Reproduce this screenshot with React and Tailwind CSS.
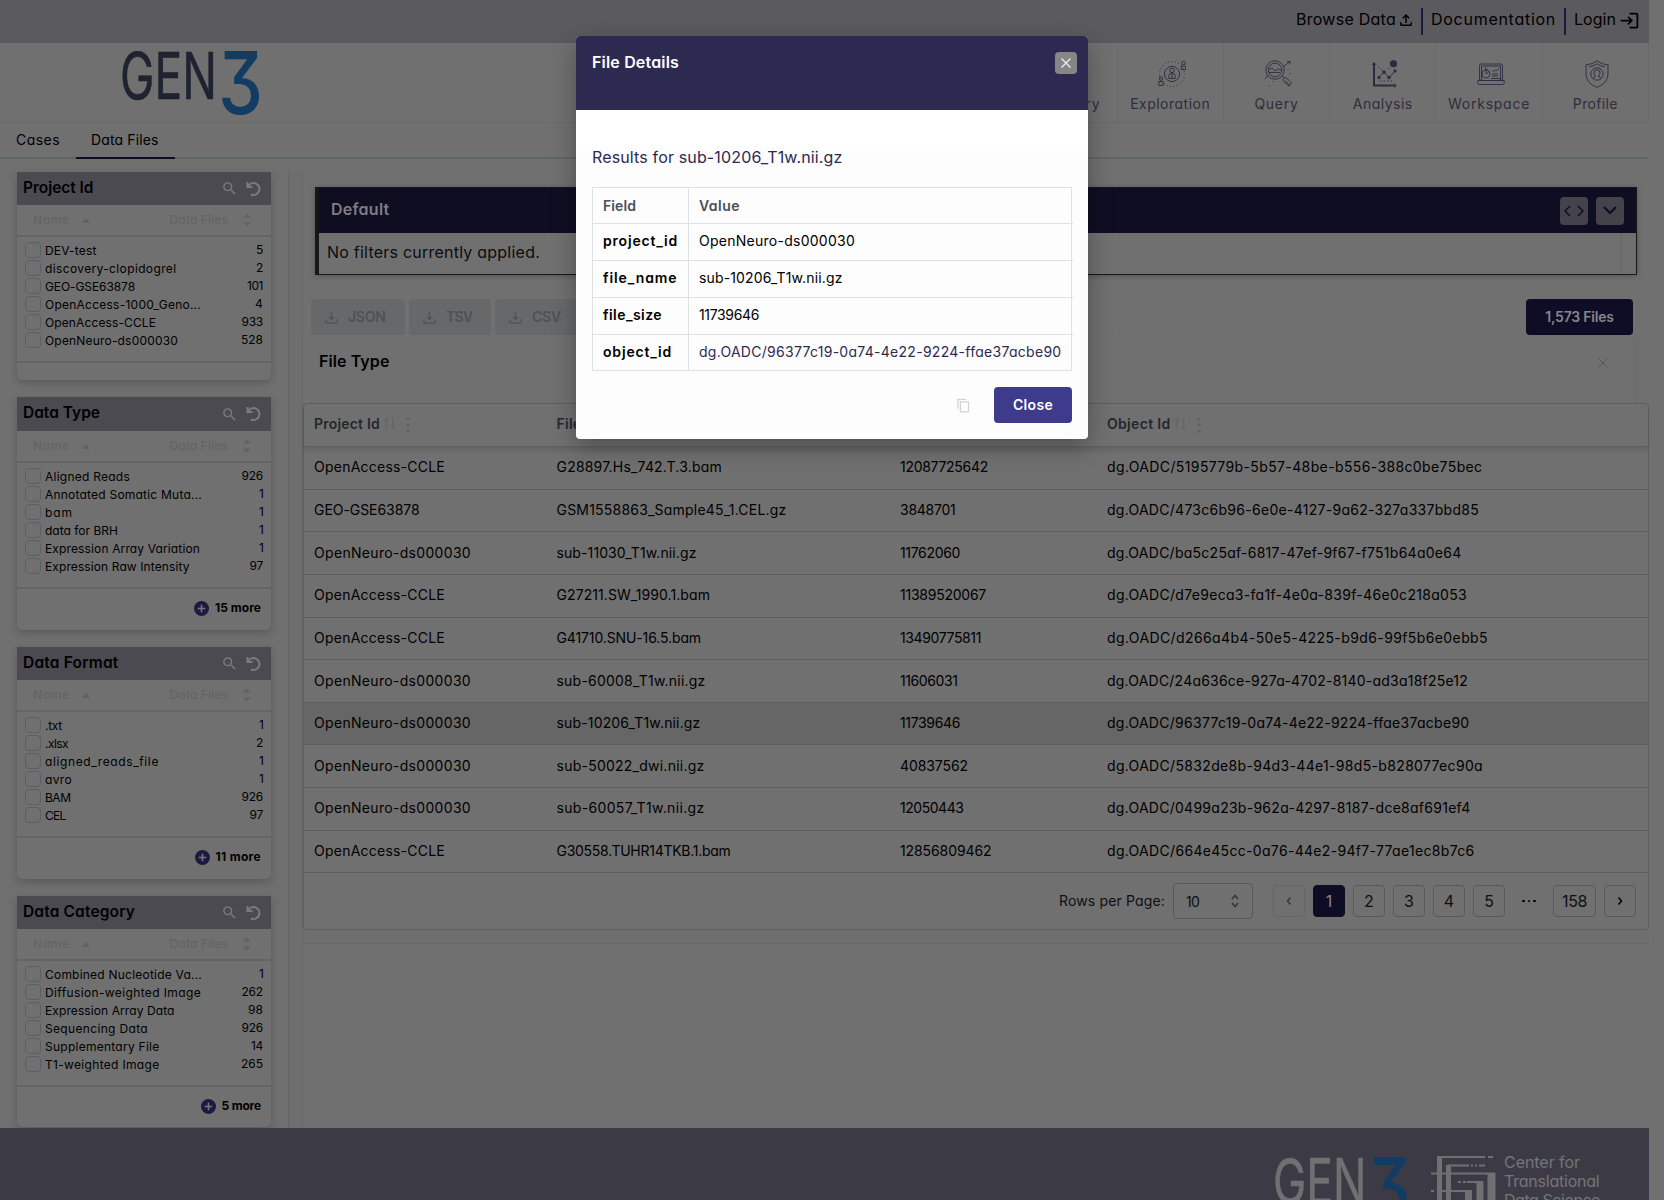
import { useLayoutEffect, useRef, useState } from "react";
import { MdSearch, MdContentCopy, MdLogin, MdOutlineFileUpload } from "react-icons/md";

/* Text run tracked so that it fills the given width. */
function T({ w, className = "", children }) {
  const ref = useRef(null);
  const [ls, setLs] = useState(0);
  useLayoutEffect(() => {
    if (!w || !ref.current) return;
    const natural = ref.current.getBoundingClientRect().width;
    setLs((w - natural) / children.length);
  }, []);
  return (
    <span className={"block whitespace-nowrap " + className}>
      <span ref={ref} style={w ? { letterSpacing: ls + "px" } : undefined}>{children}</span>
    </span>
  );
}

const facets = [
  {
    title: "Project Id", tw: 70.5, card: "h-[208px] mb-[17px]", head: "h-[33px]", more: null,
    rows: [["DEV-test", 51.5, "5", 7], ["discovery-clopidogrel", 131.5, "2", 7], ["GEO-GSE63878", 90, "101", 16], ["OpenAccess-1000_Geno...", 156, "4", 8], ["OpenAccess-CCLE", 111, "933", 21.5], ["OpenNeuro-ds000030", 133, "528", 22]],
  },
  {
    title: "Data Type", tw: 77, card: "h-[233px] mb-[17px]", head: "h-[34px]", more: "15 more", mw: 46,
    rows: [["Aligned Reads", 85, "926", 21.5], ["Annotated Somatic Muta...", 157, "1", 4], ["bam", 28, "1", 4], ["data for BRH", 73, "1", 4], ["Expression Array Variation", 155, "1", 4], ["Expression Raw Intensity", 144.5, "97", 13.5]],
  },
  {
    title: "Data Format", tw: 95.5, card: "h-[232px] mb-[17px]", head: "h-[33px]", more: "11 more", mw: 45.5,
    rows: [[".txt", 17, "1", 4], [".xlsx", 23, "2", 7], ["aligned_reads_file", 114, "1", 4], ["avro", 27, "1", 4], ["BAM", 25.5, "926", 21.5], ["CEL", 20.5, "97", 13.5]],
  },
  {
    title: "Data Category", tw: 112, card: "h-[231px]", head: "h-[33px]", more: "5 more", mw: 39.5,
    rows: [["Combined Nucleotide Va...", 157, "1", 4], ["Diffusion-weighted Image", 156, "262", 21.5], ["Expression Array Data", 129.5, "98", 15], ["Sequencing Data", 103, "926", 21.5], ["Supplementary File", 114.5, "14", 12], ["T1-weighted Image", 114.5, "265", 22]],
  },
];

const CC = ["OpenAccess-CCLE", 131];
const ON = ["OpenNeuro-ds000030", 157];
const files = [
  [CC, ["G28897.Hs_742.T.3.bam", 165.5], ["12087725642", 88], ["dg.OADC/5195779b-5b57-48be-b556-388c0be75bec", 375.5]],
  [["GEO-GSE63878", 105.5], ["GSM1558863_Sample45_1.CEL.gz", 230], ["3848701", 55.5], ["dg.OADC/473c6b96-6e0e-4127-9a62-327a337bbd85", 372]],
  [ON, ["sub-11030_T1w.nii.gz", 140], ["11762060", 60], ["dg.OADC/ba5c25af-6817-47ef-9f67-f751b64a0e64", 354.5]],
  [CC, ["G27211.SW_1990.1.bam", 153.5], ["11389520067", 86], ["dg.OADC/d7e9eca3-fa1f-4e0a-839f-46e0c218a053", 360]],
  [CC, ["G41710.SNU-16.5.bam", 144.5], ["13490775811", 81], ["dg.OADC/d266a4b4-50e5-4225-b9d6-99f5b6e0ebb5", 381]],
  [ON, ["sub-60008_T1w.nii.gz", 149], ["11606031", 57.5], ["dg.OADC/24a636ce-927a-4702-8140-ad3a18f25e12", 361]],
  [ON, ["sub-10206_T1w.nii.gz", 144], ["11739646", 60], ["dg.OADC/96377c19-0a74-4e22-9224-ffae37acbe90", 362.5]],
  [ON, ["sub-50022_dwi.nii.gz", 148], ["40837562", 68], ["dg.OADC/5832de8b-94d3-44e1-98d5-b828077ec90a", 376]],
  [ON, ["sub-60057_T1w.nii.gz", 148], ["12050443", 63.5], ["dg.OADC/0499a23b-962a-4297-8187-dce8af691ef4", 363.5]],
  [CC, ["G30558.TUHR14TKB.1.bam", 174], ["12856809462", 91.5], ["dg.OADC/664e45cc-0a76-44e2-94f7-77ae1ec8b7c6", 367.5]],
];

function Gen3Logo({ className, ink, blue }) {
  return (
    <svg viewBox="0 0 138 64" className={className}>
      <text x="-2" y="48.2" fontSize="65" fontFamily="Inter, sans-serif" fontWeight="400" textLength="97" lengthAdjust="spacingAndGlyphs" fill={ink} stroke={ink} strokeWidth="0.6">GEN</text>
      <text x="96" y="62.5" fontSize="86" fontFamily="Inter, sans-serif" fontWeight="500" textLength="45" lengthAdjust="spacingAndGlyphs" fill={blue} className="[font-feature-settings:'cv09']">3</text>
    </svg>
  );
}

const navIcons = {
  Exploration: (
    <>
      <circle cx="14" cy="14" r="7.6" />
      <circle cx="14" cy="14" r="12.5" strokeDasharray="1 2.4" />
      <circle cx="14" cy="10.5" r="2.2" />
      <path d="M10.8 18.5v-3.2q0-1.8 3.2-1.8t3.2 1.8v3.2zM14 14v4.5" />
      <circle cx="25.5" cy="3" r="1.8" /><path d="M23.3 9.5v-3.5h4.4v3.5z" />
      <circle cx="3" cy="18.5" r="1.8" /><path d="M.8 25.5v-4h4.4v4z" />
    </>
  ),
  Query: (
    <>
      <circle cx="11" cy="10" r="9.2" /><circle cx="11" cy="10" r="6.8" />
      <path d="M5 9.5l3-1.5 3 3 3-2 3.500 1M5 12.500h11M18 16l2.200 2M18.500 20l3-3 6 6-2.500 3.200zM21 20.500l4.500 4.500M19 7l6-5M23 1.500h3v3M1 19l3-4M5 25v1M9 21v1M24 9v1M26 13v1" />
    </>
  ),
  Analysis: (
    <>
      <path d="M4 3v22.500h21" strokeWidth="2" /><path d="M1.800 5L4 2.500 6.200 5M24 23.500l2.500 2-2.500 2" />
      <circle cx="23.500" cy="3.800" r="3.200" fill="currentColor" />
      <path d="M8 18l6-6 5 6 6-7" /><path d="M8 7l4 3M18 9l3-2M10 21h12" strokeDasharray="1.500 2" />
      <circle cx="9" cy="17.500" r="1.300" fill="currentColor" /><circle cx="14" cy="12" r="1.300" fill="currentColor" /><circle cx="19" cy="17.500" r="1.300" fill="currentColor" /><circle cx="25" cy="11" r="1.200" fill="currentColor" />
    </>
  ),
  Workspace: (
    <>
      <rect x="2.500" y="4" width="23" height="16.500" rx="1.500" /><rect x="4.500" y="6" width="19" height="14.500" />
      <path d="M.8 20.500h26.400v2.500q0 1.500-1.500 1.500H2.300q-1.500 0-1.500-1.500zM8.500 7.500v2h2M15 14h6M15 16h6M14 18.500h9M15.500 12l2-2 2 1 2.500-3" />
      <circle cx="9" cy="14" r="4" /><path d="M9 10.500v3.500l2.500-2" />
    </>
  ),
  Profile: (
    <>
      <path d="M14 .8q4.500 3.800 11 4v9.200q0 9-11 13.500Q3 23 3 14V4.800q6.500-.2 11-4z" /><path d="M6 6.800q4-.3 8-3 4 2.700 8 3" />
      <circle cx="14" cy="14" r="6.200" /><path d="M10.500 18.500q0-2 2-2.300-1.500-1.700-1.500-3.500 0-3 3-3t3 3q0 1.800-1.500 3.500 2 .3 2 2.300" />
    </>
  ),
};

function NavItem({ name, w }) {
  return (
    <div className="flex w-[106.3px] flex-col items-center border-l border-[#696969] pt-[17px]">
      <svg viewBox="0 0 28 28" fill="none" stroke="currentColor" strokeWidth="0.9" className="ml-[3px] h-7 w-7 text-[#2c2a40]">{navIcons[name]}</svg>
      <T w={w} className="mt-[6px] text-[14px] leading-[20px] text-[#2f2d3c]">{name}</T>
    </div>
  );
}

function Facet({ f }) {
  return (
    <div className={"flex w-[254px] shrink-0 flex-col overflow-hidden rounded-b-md bg-[#707070] shadow-[0_3px_10px_rgba(0,0,0,0.22)] " + f.card}>
      <div className={"flex shrink-0 items-center bg-[#4a4a50] pl-[6px] pr-[9px] " + f.head}>
        <T w={f.tw} className="grow pb-[2px] text-[15.5px] font-semibold leading-[20px] text-black">{f.title}</T>
        <MdSearch className="mr-[8px] h-[17px] w-[17px] text-[#7b7b7d]" />
        <svg viewBox="0 0 16 16" fill="none" stroke="#7b7b7d" strokeWidth="2" className="h-4 w-4">
          <path d="M1.500 1v5h5M2 5.500A6 6 0 1 1 5 13.500" />
        </svg>
      </div>
      <div className="flex h-[30px] shrink-0 items-center pl-4 pr-5 text-[12px] font-medium text-[#646464]">
        <T w={36.5}>Name</T>
        <svg viewBox="0 0 8 5" className="ml-3 h-[5px] w-2"><path d="M0 5L4 0l4 5z" fill="#626262" /></svg>
        <T w={58.5} className="ml-auto">Data Files</T>
        <svg viewBox="0 0 8 14" className="ml-[15px] h-[14px] w-2"><path d="M0 4.500L4 .5l4 4zM0 9.500l4 4 4-4z" fill="#626262" /></svg>
      </div>
      <div className="h-[128px] shrink-0 border-y-2 border-[#646466] pl-2 pr-2 pt-1">
        {f.rows.map(([name, w, n, nw]) => (
          <div key={name} className="flex h-[18px] items-center text-[12px] leading-none text-black">
            <span className="mr-1 h-4 w-4 rounded-[4px] border border-[#5d5e63]" />
            <T w={w} className="pt-px leading-[16px]">{name}</T>
            <T w={nw} className="ml-auto pb-px leading-[16px]">{n}</T>
          </div>
        ))}
      </div>
      {f.more && (
        <div className="flex items-center justify-end gap-[6px] pr-[10px] pt-[11px]">
          <svg viewBox="0 0 16 16" className="h-[15px] w-[15px]"><circle cx="8" cy="8" r="8" fill="#1d1a42" /><path d="M8 4v8M4 8h8" stroke="#77767c" strokeWidth="1.700" /></svg>
          <T w={f.mw} className="text-[12px] font-bold leading-[16px] text-black">{f.more}</T>
        </div>
      )}
    </div>
  );
}

function ColHead({ label, w, icons = true }) {
  return (
    <span className="flex items-center pb-[3px]">
      <T w={w}>{label}</T>
      {icons && (
        <>
          <svg viewBox="0 0 14 14" fill="none" stroke="#606163" className="ml-[3px] h-[13px] w-[13px]"><path d="M3.500 13V1.500M1 4l2.500-2.500L6 4M10.500 1v11.500M8 10l2.500 2.500L13 10" /></svg>
          <svg viewBox="0 0 4 16" fill="#606163" className="ml-[10px] mt-[2px] h-4 w-1"><circle cx="2" cy="2" r="1.600" /><circle cx="2" cy="8" r="1.600" /><circle cx="2" cy="14" r="1.600" /></svg>
        </>
      )}
    </span>
  );
}

function Download({ label, w, cls }) {
  return (
    <div className={"flex h-9 items-center rounded bg-[#66686a] pl-[14px] text-[14px] font-semibold text-[#4d5256] " + cls}>
      <svg viewBox="0 0 14 14" fill="none" stroke="currentColor" strokeWidth="1.300" className="mr-[10px] h-[13px] w-[13px]"><path d="M1 8.500v3.500q0 1 1 1h10q1 0 1-1V8.500M7 .5v8M4 6l3 3 3-3" /></svg>
      <T w={w} className="pb-px">{label}</T>
    </div>
  );
}

const grid = "grid grid-cols-[242.5px_343.5px_207px_1fr] items-center pl-[10px]";
const pageBtn = "flex h-8 items-center justify-center rounded border text-[16px] ";

function Chevron({ d, color }) {
  return <svg viewBox="0 0 16 16" fill="none" stroke={color} strokeWidth="1.500" className="h-4 w-4"><path d={d} /></svg>;
}

function Page() {
  return (
    <div className="flex h-[1200px] w-[1649px] flex-col">
      <div className="flex h-[43px] shrink-0 items-center justify-end bg-[#5b5a5f] pr-[9px] text-[16px] text-black">
        <T w={100} className="pb-[5px]">Browse Data</T>
        <MdOutlineFileUpload className="mb-1 ml-[1px] mr-[6px] h-[18px] w-[18px]" />
        <span className="h-[27px] w-[2px] bg-[#1d1a42]" />
        <T w={125} className="ml-[8px] pb-[5px]">Documentation</T>
        <span className="ml-[8px] h-[27px] w-[2px] bg-[#1d1a42]" />
        <T w={42} className="ml-[8px] pb-[5px]">Login</T>
        <MdLogin className="mb-[3px] ml-[3px] h-[21px] w-[21px]" />
      </div>
      <div className="flex h-20 shrink-0 border-b border-[#696969] pl-[122px]">
        <Gen3Logo className="mt-2 h-16 w-[138px]" ink="#1f2330" blue="#133c62" />
        <div className="ml-auto flex border-r border-[#696969]">
          <div className="flex w-[110px] flex-col items-end pr-[16px] pt-[51px]"><T w={75} className="text-[14px] leading-[20px] text-[#2f2d3c]">Discovery</T></div>
          <NavItem name="Exploration" w={80} />
          <NavItem name="Query" w={44} />
          <NavItem name="Analysis" w={60} />
          <NavItem name="Workspace" w={82} />
          <NavItem name="Profile" w={45} />
        </div>
      </div>
      <div className="flex h-9 shrink-0 border-b-2 border-[#5f6666] text-[14px] text-black">
        <div className="flex h-9 w-[76px] items-center pb-[3px] pl-4"><T w={44}>Cases</T></div>
        <div className="flex h-9 w-[99px] items-center border-b-2 border-[#0f0d25] pb-px pl-[15px]"><T w={67.500}>Data Files</T></div>
      </div>
      <div className="flex h-[969px] shrink-0 overflow-hidden pt-[13px]">
        <div className="flex w-[289px] shrink-0 flex-col border-r border-[#656565] pl-[17px]">
          {facets.map((f) => <Facet key={f.title} f={f} />)}
        </div>
        <div className="w-[13px] shrink-0 bg-[#6e6e6e]" />
        <div className="flex grow flex-col border-l border-[#676767]">
          <div className="ml-3 mr-3 mt-[15px] flex h-[88px] shrink-0 flex-col border border-l-4 border-[#161719] shadow-[0_1px_6px_rgba(0,0,0,0.25)]">
            <div className="flex h-[45px] items-center bg-[#0f0d22] pl-3 pr-[12px]">
              <T w={58.500} className="pb-1 text-[16px] font-semibold text-[#7e7e84]">Default</T>
              <span className="ml-auto flex h-7 w-7 items-center justify-center rounded bg-[#44434c]"><svg viewBox="0 0 20 12" fill="none" stroke="#0f0d22" strokeWidth="1.500" className="h-3 w-5"><path d="M6 1L1 6l5 5M14 1l5 5-5 5" /></svg></span>
              <span className="ml-2 flex h-7 w-7 items-center justify-center rounded bg-[#44434c]"><svg viewBox="0 0 14 9" fill="none" stroke="#0f0d22" strokeWidth="2.200" className="h-[9px] w-[14px]"><path d="M1 1l6 6 6-6" /></svg></span>
            </div>
            <div className="mr-[14px] flex grow items-center border-r border-[#666] pb-1 pl-2"><T w={213} className="text-[16px] text-[#0c0c0c]">No filters currently applied.</T></div>
          </div>
          <div className="ml-2 mr-4 mt-6 flex shrink-0 gap-1">
            <Download label="JSON" w={37.500} cls="w-[94px]" />
            <Download label="TSV" w={26.500} cls="w-[82px]" />
            <Download label="CSV" w={29} cls="w-[84px]" />
            <div className="ml-auto flex h-9 w-[107px] items-center justify-center rounded bg-[#0f0d25] pb-px text-[14px] font-semibold text-[#86858c]"><T w={68.500}>1,573 Files</T></div>
          </div>
          <div className="mr-[16px] flex h-[68px] shrink-0 items-start justify-between pl-4 pr-[25px] pt-[14px] shadow-[2px_2px_6px_rgba(0,0,0,0.04)]">
            <T w={70.500} className="text-[16px] font-semibold leading-[24px] text-black">File Type</T>
            <svg viewBox="0 0 10 10" stroke="#565656" className="mt-[9px] h-[10px] w-[10px]"><path d="M.5.5l9 9M9.500.5l-9 9" /></svg>
          </div>
          <div className="flex shrink-0 flex-col rounded border border-[#5c5f60] bg-[#707070] text-[14px]">
            <div className={grid + " h-[43px] border-b border-[#5c5f60] font-semibold text-[#23282d] shadow-[0_3px_5px_rgba(0,0,0,0.12)]"}>
              <ColHead label="Project Id" w={66} />
              <ColHead label="File Name" w={70} />
              <ColHead label="File Size" w={60} icons={false} />
              <ColHead label="Object Id" w={63.500} />
            </div>
            {files.map((r, i) => (
              <div key={i} className={grid + " h-[42.65px] border-b border-[#5c5f60] pb-[2px] text-black " + (i === 6 ? "bg-[#666]" : "")}>
                {r.map(([t, w]) => <T key={t} w={w}>{t}</T>)}
              </div>
            ))}
            <div className="flex h-[56px] items-center justify-end gap-2 pr-[12px] text-[#0e0f10]">
              <T w={106} className="pb-px">Rows per Page:</T>
              <div className="mr-3 flex h-9 w-20 items-center justify-between rounded border border-[#56595c] pl-3 pr-[9px]">
                <T w={13}>10</T>
                <Chevron color="#33363a" d="M5 6l3-3.500L11 6M5 10l3 3.500L11 10" />
              </div>
              <div className={pageBtn + "w-8 border-[#656668]"}><Chevron color="#3a3b3c" d="M9.500 4.500L6.500 8l3 3.500" /></div>
              <div className={pageBtn + "w-8 border-[#0f0d25] bg-[#0f0d25] pb-px text-[#86858c]"}>1</div>
              {["2", "3", "4", "5"].map((n) => <div key={n} className={pageBtn + "w-8 border-[#56595c] pb-px"}>{n}</div>)}
              <div className="flex h-8 w-8 items-center justify-center gap-[3px]"><span className="h-[2px] w-[2.500px] rounded bg-black" /><span className="h-[2px] w-[2.500px] rounded bg-black" /><span className="h-[2px] w-[2.500px] rounded bg-black" /></div>
              <div className={pageBtn + "w-[43px] border-[#56595c] pb-px"}><T w={25}>158</T></div>
              <div className={pageBtn + "w-8 border-[#56595c]"}><Chevron color="#000" d="M6.500 4.500L9.500 8l-3 3.500" /></div>
            </div>
          </div>
          <div className="h-[14px] shrink-0 border-b border-[#676767] bg-[#6e6e6e]" />
        </div>
      </div>
      <div className="flex h-[72px] shrink-0 overflow-hidden bg-[#3c3b45] pl-[1275px] pt-[28px]">
        <Gen3Logo className="h-[64px] w-[133px] shrink-0" ink="#707072" blue="#133c62" />
        <svg viewBox="0 0 65 44" fill="none" stroke="#707072" className="ml-[23px] h-[44px] w-[65px] shrink-0">
          <path d="M8.500 44V1M17.500 44V9" strokeWidth="5" />
          <path d="M6 1h48M57 1h5M17 9.500h21M40 9.500h2M44 9.500h2M48 9.500h6" strokeWidth="2" />
          <path d="M0 17.500h64" strokeWidth="2" /><path d="M60.500 17v27" strokeWidth="8" />
          <path d="M27 26h3M32 26h3M36 26h16" strokeWidth="2" /><path d="M49 26v18" strokeWidth="7" />
          <path d="M0 35h3M11 35h30" strokeWidth="2" /><path d="M37.500 35v9" strokeWidth="7" />
        </svg>
        <div className="-mt-[3px] ml-[8px] flex flex-col text-[16px] leading-[19px] text-[#757577]">
          <T w={76}>Center for</T>
          <T w={95.500}>Translational</T>
          <T w={96}>Data Science</T>
        </div>
      </div>
    </div>
  );
}

const details = [
  ["project_id", 75, "OpenNeuro-ds000030", 156],
  ["file_name", 74.500, "sub-10206_T1w.nii.gz", 143.500],
  ["file_size", 59, "11739646", 60],
  ["object_id", 69, "dg.OADC/96377c19-0a74-4e22-9224-ffae37acbe90", 362.500],
];

function Modal() {
  return (
    <div className="absolute left-[576px] top-9 flex h-[403px] w-[512px] flex-col overflow-hidden rounded bg-[#fdfdfd] shadow-[0_8px_24px_rgba(0,0,0,0.3)]">
      <div className="flex h-[74px] shrink-0 items-start justify-between bg-[#2d2a52] pl-4 pr-[11px] pt-4">
        <T w={87} className="mt-[-2px] text-[16px] font-semibold leading-[24px] text-white">File Details</T>
        <span className="flex h-[22px] w-[22px] items-center justify-center rounded bg-[#868686]"><svg viewBox="0 0 10 10" stroke="#f1f1f1" strokeWidth="1.200" className="h-[10px] w-[10px]"><path d="M.5.5l9 9M9.500.5l-9 9" /></svg></span>
      </div>
      <div className="h-9 shrink-0 bg-white" />
      <div className="flex grow flex-col px-4">
        <T w={250.500} className="-mt-px text-[16px] leading-[24px] text-[#2d2a52]">Results for sub-10206_T1w.nii.gz</T>
        <div className="mt-[18px] grid grid-cols-[96px_384px] border border-[#dee2e6] text-[14px] text-black">
          <div className="flex h-[35px] items-center border-r border-[#dee2e6] pb-px pl-[10px] font-semibold text-[#495057]"><T w={33}>Field</T></div>
          <div className="flex items-center pb-px pl-[10px] font-semibold text-[#495057]"><T w={41}>Value</T></div>
          {details.map(([k, kw, v, vw], i) => (
            <div key={k} className={"col-span-2 grid grid-cols-[96px_1fr] border-t border-[#dee2e6] " + (i === 3 ? "h-[36px]" : "h-[37px]")}>
              <div className="flex items-center border-r border-[#dee2e6] pb-[3px] pl-[10px] font-semibold"><T w={kw}>{k}</T></div>
              <div className={"flex items-center pb-[3px] pl-[10px] " + (i === 3 ? "text-[#2d2a52]" : "")}><T w={vw}>{v}</T></div>
            </div>
          ))}
        </div>
        <div className="mt-4 flex items-center justify-end">
          <MdContentCopy className="mr-[23px] h-[15px] w-[15px] text-[#ced4da]" />
          <div className="flex h-9 w-[78px] items-center justify-center rounded bg-[#3e3a8c] pb-px text-[14px] font-semibold text-white"><T w={40}>Close</T></div>
        </div>
      </div>
    </div>
  );
}

export default function App() {
  return (
    <div className="relative h-[1200px] w-[1664px] overflow-hidden bg-[#707070] font-[Inter,sans-serif] [font-feature-settings:'cv11']">
      <Page />
      <Modal />
    </div>
  );
}
